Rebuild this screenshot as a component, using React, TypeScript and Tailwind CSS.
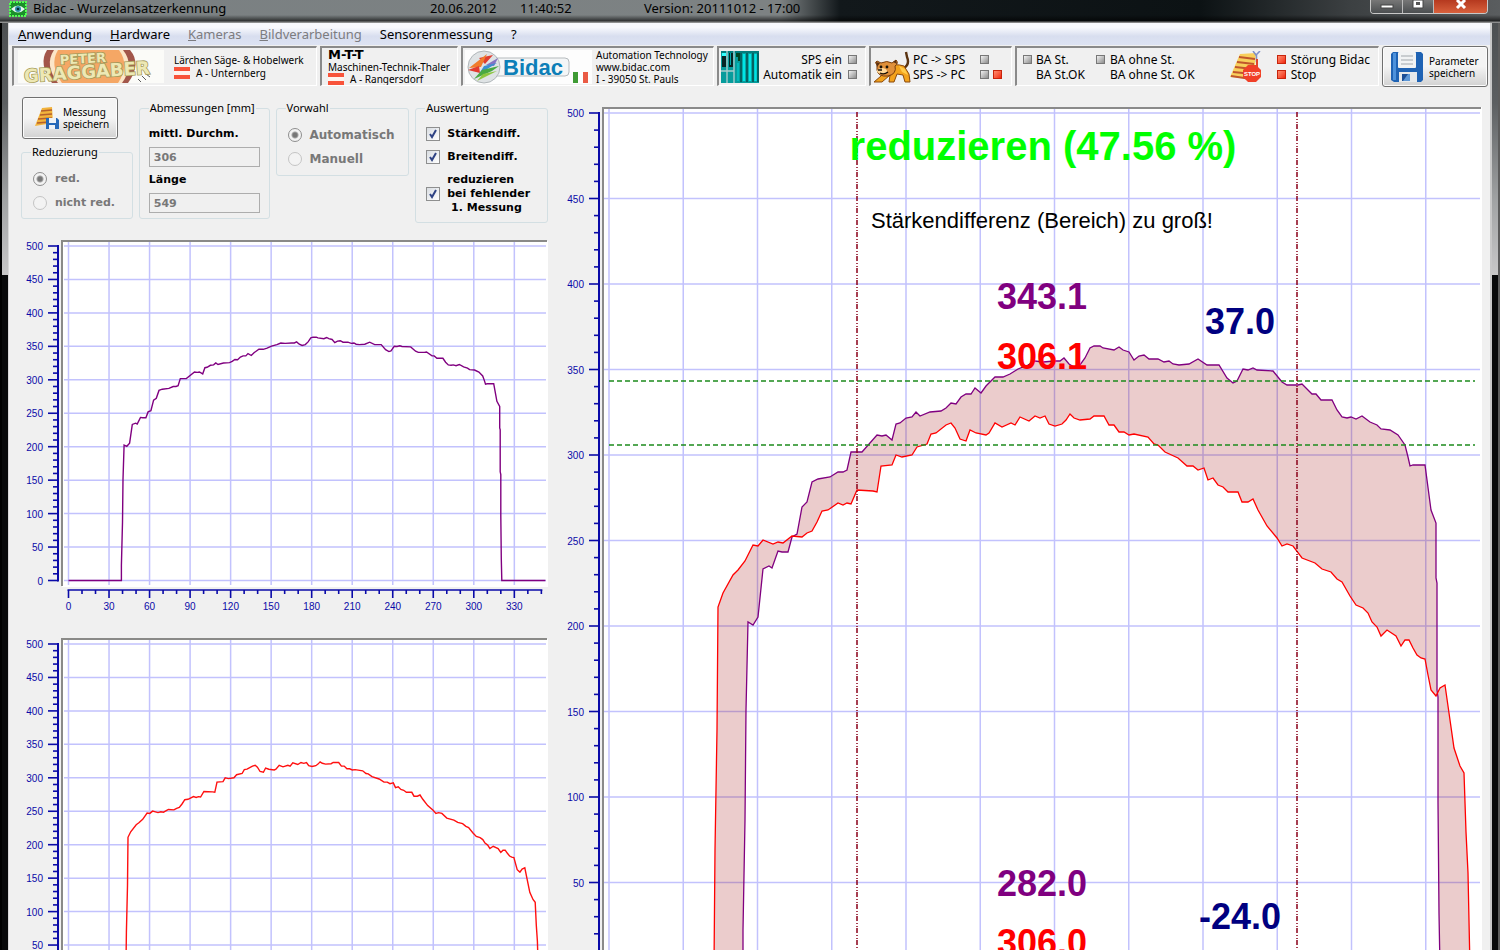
import React from 'react';

type Point = [number, number];

interface Scale {
  left: number;
  top: number;
  pxPerX: number;
  pxPerY: number;
}

// Outlines sampled on the grid of the large plot: 609/968 is the origin.
const SAMPLE_ORIGIN = { x: 609, y: 968, perX: 2.475, perY: 1.71 };

const UPPER_SAMPLES =
  '743,968 743,930 745,820 746,710 748,622 753,625 758,617 763,569 769,566 772,568 778,551 782,552 788,552 792,537 797,534 802,507 807,502 812,482 818,479 830,477 838,472 843,472 847,470 851,452 862,452 877,435 882,436 886,435 892,440 896,424 900,423 906,418 912,417 916,412 920,416 930,412 941,411 946,408 951,403 956,404 961,397 966,394 971,394 975,388 981,393 986,386 995,377 1003,377 1010,374 1018,369 1028,365 1035,361 1043,362 1055,361 1060,361 1064,358 1069,364 1074,367 1080,365 1085,358 1090,348 1094,346 1100,346 1103,348 1114,350 1119,347 1123,350 1129,352 1134,360 1139,356 1144,355 1149,359 1158,359 1164,362 1169,361 1173,364 1179,365 1189,364 1198,359 1207,365 1219,365 1227,378 1233,383 1237,381 1243,369 1248,370 1253,368 1257,370 1273,371 1282,382 1287,385 1298,385 1302,384 1312,394 1316,394 1321,400 1332,400 1337,410 1342,417 1347,418 1351,417 1356,419 1362,416 1370,422 1377,425 1381,429 1390,430 1398,435 1405,445 1408,457 1410,466 1413,465 1425,465 1431,510 1436,523 1436,578 1437,583 1437,690 1438,697 1438,802 1439,913 1440,968';

const LOWER_SAMPLES =
  '714,968 715,850 717,730 718,607 723,593 733,575 738,570 745,561 753,545 758,546 763,540 773,544 778,542 783,543 792,536 802,537 807,533 812,531 817,522 822,511 828,510 838,503 843,505 847,503 851,504 857,490 873,491 877,492 881,466 892,465 896,455 902,457 912,455 917,447 927,444 931,434 936,433 946,425 951,423 955,428 960,439 966,441 970,430 976,433 986,435 989,433 995,423 1002,427 1011,423 1015,425 1020,417 1029,421 1035,416 1040,418 1045,416 1049,424 1055,426 1062,424 1066,420 1070,414 1074,418 1080,420 1090,419 1094,416 1104,416 1109,425 1114,425 1119,432 1124,432 1129,435 1134,434 1148,437 1154,444 1158,445 1165,452 1178,458 1187,466 1193,466 1198,470 1204,468 1208,480 1213,478 1218,485 1223,487 1228,492 1238,492 1242,502 1248,502 1253,499 1258,510 1267,526 1277,538 1282,546 1287,544 1293,546 1302,558 1315,563 1322,569 1331,572 1337,579 1342,582 1350,596 1356,605 1363,608 1368,613 1372,622 1377,627 1381,636 1387,630 1396,636 1401,646 1405,640 1409,640 1413,648 1417,655 1421,658 1425,659 1428,675 1431,690 1436,696 1440,688 1445,685 1449,713 1454,748 1460,766 1464,773 1466,832 1468,873 1470,968';

const parseSamples = (samples: string): Point[] =>
  samples.split(' ').map(pair => {
    const [x, y] = pair.split(',').map(Number);
    return [(x - SAMPLE_ORIGIN.x) / SAMPLE_ORIGIN.perX, (SAMPLE_ORIGIN.y - y) / SAMPLE_ORIGIN.perY];
  });

const upper = parseSamples(UPPER_SAMPLES);
const lower = parseSamples(LOWER_SAMPLES);

const camera1: Point[] = [[0, 0], ...upper.map(([x, y]): Point => [x - 15, y]), [353, 0]];
const camera2: Point[] = [[0, 0], ...lower, [353, 0]];

const toPoints = (data: Point[], s: Scale) =>
  data.map(([x, y]) => `${(s.left + x * s.pxPerX).toFixed(1)},${(s.top + (500 - y) * s.pxPerY).toFixed(1)}`).join(' ');

const range = (from: number, to: number, step: number) =>
  Array.from({ length: Math.floor((to - from) / step) + 1 }, (_, i) => from + i * step);

const AXIS = '#0a0aa8';
const GRID = '#c2c2fd';

const YAxis: React.FC<{ scale: Scale; x: number; min?: number }> = ({ scale, x, min = 0 }) => {
  const y = (v: number) => scale.top + (500 - v) * scale.pxPerY;
  return (
    <g stroke={AXIS} strokeWidth="1.6">
      <line x1={x} x2={x} y1={y(500) - 1} y2={y(0) + 1} strokeWidth="2" />
      {range(0, 500, 10).map(v => (
        <line key={v} x1={v % 50 === 0 ? x - 10 : x - 5} x2={x} y1={y(v)} y2={y(v)} />
      ))}
      {range(min, 500, 50).map(v => (
        <text key={v} x={x - 15} y={y(v) + 4} textAnchor="end" fontSize="10" fill={AXIS} stroke="none">{v}</text>
      ))}
    </g>
  );
};

const CameraPlot: React.FC<{ data: Point[]; color: string; label: string }> = ({ data, color, label }) => {
  const scale: Scale = { left: 48.5, top: 10, pxPerX: 1.351, pxPerY: 0.669 };
  const x = (v: number) => scale.left + v * scale.pxPerX;
  const y = (v: number) => scale.top + (500 - v) * scale.pxPerY;
  return (
    <svg viewBox="0 0 528 380" className="block h-auto w-full font-['Liberation_Sans',Arial,sans-serif]" role="img" aria-label={label}>
      <rect x="42" y="5" width="486" height="346" fill="#fff" />
      <g stroke={GRID} strokeWidth="1.5">
        {range(0, 500, 50).map(v => <line key={v} x1="44" x2="526" y1={y(v)} y2={y(v)} />)}
        {range(0, 330, 30).map(v => <line key={v} x1={x(v)} x2={x(v)} y1="6" y2="349" />)}
      </g>
      <path d="M42 350V5H527" fill="none" stroke="#8a8a88" strokeWidth="2" />
      <YAxis scale={scale} x={38} />
      <g stroke={AXIS} strokeWidth="1.6">
        <line x1={x(0) - 1} x2={x(350) + 1} y1="354" y2="354" />
        {range(0, 350, 10).map(v => <line key={v} x1={x(v)} x2={x(v)} y1="354" y2={v % 30 === 0 ? 362 : 358} />)}
        {range(0, 330, 30).map(v => (
          <text key={v} x={x(v)} y="374" textAnchor="middle" fontSize="10" fill={AXIS} stroke="none">{v}</text>
        ))}
      </g>
      <polyline points={toPoints(data, scale)} fill="none" stroke={color} strokeWidth="1.4" />
    </svg>
  );
};

const ResultPlot: React.FC = () => {
  const scale: Scale = { left: 49, top: 13, pxPerX: 2.475, pxPerY: 1.71 };
  const x = (v: number) => scale.left + v * scale.pxPerX;
  const y = (v: number) => scale.top + (500 - v) * scale.pxPerY;
  return (
    <svg viewBox="0 0 922 900" className="block h-auto w-full font-['Liberation_Sans',Arial,sans-serif]" role="img" aria-label="Auswertung">
      <rect x="42" y="7" width="880" height="893" fill="#fff" />
      <g stroke={GRID} strokeWidth="1.5">
        {range(50, 500, 50).map(v => <line key={v} x1="44" x2="920" y1={y(v)} y2={y(v)} />)}
        {range(0, 330, 30).map(v => <line key={v} x1={x(v)} x2={x(v)} y1="9" y2="900" />)}
      </g>
      <path d="M43 900V8H921" fill="none" stroke="#8a8a8a" strokeWidth="2" />
      <YAxis scale={scale} x={39} min={50} />
      <polygon points={toPoints([...upper, ...[...lower].reverse()], scale)} fill="#990000" fillOpacity="0.2" />
      <polyline points={toPoints(upper, scale)} fill="none" stroke="#800080" strokeWidth="1.3" />
      <polyline points={toPoints(lower, scale)} fill="none" stroke="#ff0000" strokeWidth="1.3" />
      <g stroke="#1c8a1c" strokeWidth="1.5" strokeDasharray="5 3">
        <line x1="49" x2="915" y1="281" y2="281" />
        <line x1="49" x2="915" y1="345" y2="345" />
      </g>
      <g stroke="#8b0018" strokeWidth="1.5" strokeDasharray="5 2 1 2 1 1">
        <line x1="297" x2="297" y1="12" y2="900" />
        <line x1="737" x2="737" y1="12" y2="900" />
      </g>
      <g fontWeight="bold" textAnchor="middle" fontSize="36">
        <text x="483" y="60" fontSize="40" fill="#00ff00">reduzieren (47.56 %)</text>
        <text x="482" y="209" fill="#800080">343.1</text>
        <text x="482" y="269" fill="#ff0000">306.1</text>
        <text x="680" y="234" fill="#000080">37.0</text>
        <text x="482" y="796" fill="#800080">282.0</text>
        <text x="482" y="855" fill="#ff0000">306.0</text>
        <text x="680" y="829" fill="#000080">-24.0</text>
      </g>
      <text x="482" y="128" textAnchor="middle" fontSize="22" fill="#000">Stärkendifferenz (Bereich) zu groß!</text>
    </svg>
  );
};

const Led: React.FC<{ on?: boolean }> = ({ on }) => (
  <span className={`inline-block size-[9px] shrink-0 border ${on ? 'border-[#c8240c] bg-linear-to-br from-[#ff8a6c] to-[#f01c00]' : 'border-[#777] bg-linear-to-br from-[#f2f2f2] to-[#8e8e8e]'}`} />
);

const AustriaFlag: React.FC = () => (
  <svg viewBox="0 0 16 12" className="h-3 w-4 shrink-0">
    <rect width="16" height="12" fill="#f8533a" />
    <rect y="4" width="16" height="4" fill="#fff3ee" />
  </svg>
);

const GraggaberLogo: React.FC = () => (
  <svg viewBox="0 0 146 33" className="h-[33px] w-[146px] shrink-0 font-['DejaVu_Sans',Verdana,sans-serif]">
    <rect width="146" height="33" fill="#fbfbf8" />
    <path d="M29 0H112Q124 14 110 33H34Q20 14 29 0Z" fill="#a2564a" />
    <path d="M36 0H105Q117 15 104 33H40Q26 15 36 0Z" fill="#fce6c8" />
    <path d="M40 0H101Q112 15 100 33H44Q31 15 40 0Z" fill="#f5a765" />
    <path d="M120 29l3 3M124 26l4 4M128 24l4 3" stroke="#5b5b5b" />
    <g fontWeight="bold" stroke="#a49a5c" strokeWidth="1.6" paintOrder="stroke" fill="#ede8b4">
      <text x="42" y="13" fontSize="13" transform="rotate(-3 70 12)">PETER</text>
      <text x="6" y="28" fontSize="18" transform="rotate(-4 70 24)">GRAGGABER</text>
    </g>
  </svg>
);

const BidacLogo: React.FC = () => (
  <svg viewBox="0 0 127 34" className="h-[34px] w-[127px] shrink-0 font-['Liberation_Sans',Arial,sans-serif]">
    <rect width="127" height="34" fill="#fdfdfd" />
    <rect x="24" y="8" width="80" height="18" rx="4" fill="#f4f6f7" stroke="#b5babd" />
    <circle cx="19" cy="17" r="16" fill="#dfe3e5" stroke="#b0b6b9" />
    <path d="M14 8l14-3-8 9z" fill="#e03c30" />
    <path d="M4 18L22 4l-6 13z" fill="#f07c2c" />
    <path d="M3 20l11-4 1 7z" fill="#e23b2f" />
    <path d="M21 15l12-7-4 8z" fill="#8572c4" />
    <path d="M14 24l5-8 13-3z" fill="#3b8fd0" />
    <path d="M9 29l8-9 17-4-7 5z" fill="#49a942" />
    <path d="M12 31l6-7 14-3z" fill="#8cc63f" />
    <text x="38" y="25" fontSize="22" fontWeight="bold" fill="#0d7fb8">Bidac</text>
    <rect x="108" y="22" width="5" height="11" fill="#3f9b35" />
    <rect x="113" y="22" width="5" height="11" fill="#fff" />
    <rect x="118" y="22" width="5" height="11" fill="#ea5b45" />
  </svg>
);

const PlcIcon: React.FC = () => (
  <svg viewBox="0 0 38 32" className="h-8 w-[38px] shrink-0">
    <rect width="38" height="32" fill="#069c9c" />
    <path d="M0 0h38v2H0z" fill="#007c7c" />
    <path d="M1 5h4v11H1zM8 2h4v14H8z" fill="#052525" />
    <path d="M1 2h4v3H1z" fill="#3ff" />
    <path d="M9 2h1v12H9z" fill="#0aa" />
    <path d="M15 2h4v8h-2V6h-2z" fill="#042" />
    <path d="M6 0v32M13 0v32M0 20h13" stroke="#a8cccc" strokeWidth="1.4" />
    <path d="M20 2v29M26 2v29M32 2v29M37 2v29" stroke="#063c3c" strokeWidth="1.2" />
    <path d="M23 3v27M29 3v27M34.500 3v27" stroke="#00e5e5" strokeWidth="2.400" />
    <path d="M17 12v18" stroke="#0bb" strokeWidth="2" />
  </svg>
);

const DogIcon: React.FC = () => (
  <svg viewBox="0 0 38 34" className="h-[34px] w-[38px] shrink-0">
    <path d="M31 18Q37 14 34 7L33 2" fill="none" stroke="#5a3310" strokeWidth="2.400" />
    <path d="M12 17Q22 13 31 16L36 24 37 32H32L30 25 24 24 21 32H16L17 25 9 32H1L8 26Z" fill="#f3a21c" stroke="#8b4a0c" />
    <path d="M26 16l6 3 3 6-6-3z" fill="#ffca4a" />
    <path d="M4 15Q1 12 4 11L8 13Q14 10 19 13L23 10Q26 13 22 16Q24 24 15 26Q5 27 4 20Z" fill="#e0903a" stroke="#7a3d0c" />
    <path d="M3 12l4 1-3 4zM20 12l3-2 1 4z" fill="#5a3010" />
    <ellipse cx="9" cy="21" rx="5" ry="3" fill="#ffd99a" />
    <circle cx="8" cy="17" r="1.400" fill="#1a1208" />
    <circle cx="14" cy="17" r="1.400" fill="#1a1208" />
    <path d="M5 20h4M7 23q4 2 8-1" stroke="#1a1208" strokeWidth="1.300" fill="none" />
  </svg>
);

const StopIcon: React.FC = () => (
  <svg viewBox="0 0 32 32" className="size-8 shrink-0 font-['Liberation_Sans',Arial,sans-serif]">
    <path d="M10 3L26 2 24 28 0 26Z" fill="#f8cf5c" />
    <path d="M9 6l16 2M7 11l17 2M5 16l18 2M3 21l20 2M1 25l20 3" stroke="#c0562c" strokeWidth="1.800" />
    <path d="M23 0l3 4 4-4M26.500 3v8" stroke="#7f8fc8" strokeWidth="1.500" fill="none" />
    <path d="M27 8v8" stroke="#e0442c" strokeWidth="2" />
    <path d="M18 14h8l5 5v7l-5 5h-8l-5-5v-7z" fill="#f04028" />
    <text x="22" y="25" textAnchor="middle" fontSize="6" fontWeight="bold" fill="#fff">STOP</text>
  </svg>
);

const FloppyIcon: React.FC<{ className: string }> = ({ className }) => (
  <svg viewBox="0 0 32 30" className={className}>
    <path d="M2 0H30L32 2V28L30 30H3L0 28V2Z" fill="#1f63b4" />
    <path d="M2 1h3v27H2z" fill="#4d92dc" />
    <rect x="7" y="0" width="18" height="16" rx="1" fill="#f1f3f4" />
    <path d="M10 4h12M10 8h12M10 12h12" stroke="#bcc1c4" strokeWidth="1.500" />
    <path d="M8 20H26V30H8Z" fill="#e6e9eb" />
    <path d="M11 22h8v7h-8z" fill="#1c4f96" />
    <path d="M12 29l5-7h2v7z" fill="#5d97d6" />
  </svg>
);

const MeasureSaveIcon: React.FC = () => (
  <svg viewBox="0 0 24 22" className="h-[22px] w-6 shrink-0">
    <path d="M7 1L17 0 18 16 0 19Z" fill="#f2b33c" />
    <path d="M6 4l11-1M5 8l12-1M3 12l14-1M2 16l12-1" stroke="#b5602c" strokeWidth="1.500" />
    <path d="M11 11H22L24 13V22H11Z" fill="#2568b8" />
    <path d="M14 11h7v5h-7zM14 18h6v4h-6z" fill="#eef2f6" />
  </svg>
);

const AppIcon: React.FC = () => (
  <svg viewBox="0 0 18 16" className="h-4 w-[18px] shrink-0">
    <rect x="1" y="1" width="16" height="14" fill="#1b8f2a" stroke="#52ff52" strokeWidth="2" strokeDasharray="2 1" />
    <path d="M2 8Q9 1 16 8Q9 15 2 8Z" fill="#e8f6f4" />
    <circle cx="9" cy="8" r="3" fill="#2e8fa8" />
    <circle cx="9" cy="8" r="1.300" fill="#082830" />
  </svg>
);

const Panel: React.FC<{ className: string; children: React.ReactNode }> = ({ className, children }) => (
  <div className={`flex h-10 items-center overflow-hidden border-t-2 border-l-2 border-t-[#8a8a8a] border-l-[#8a8a8a] border-r border-b border-r-white border-b-white ${className}`}>
    {children}
  </div>
);

const Group: React.FC<{ title: string; className: string; children: React.ReactNode }> = ({ title, className, children }) => (
  <fieldset className={`rounded-[3px] border border-[#d3dfe3] px-[9px] ${className}`}>
    <legend className="px-px text-[11px] leading-[14px]">{title}</legend>
    {children}
  </fieldset>
);

const Radio: React.FC<{ name: string; label: string; checked?: boolean; size: string }> = ({ name, label, checked, size }) => (
  <label className={`flex h-6 items-center gap-2 pl-0.5 font-['DejaVu_Sans',Verdana,sans-serif] font-bold text-[#787878] ${size}`}>
    <input
      type="radio"
      name={name}
      defaultChecked={checked}
      disabled
      className="size-[14px] shrink-0 appearance-none rounded-full border border-[#c4c4c4] bg-[#f3f3f3] checked:border-[#8e8e8e] checked:bg-[radial-gradient(circle,#777_0_2px,#a5a5a5_3px,#f3f3f3_4px)]"
    />
    {label}
  </label>
);

const Check: React.FC<{ children: React.ReactNode }> = ({ children }) => (
  <label className="flex items-center gap-[7px] font-['DejaVu_Sans',Verdana,sans-serif] text-[11px] leading-[14px] font-bold">
    <span className="relative size-[14px] shrink-0">
      <input type="checkbox" defaultChecked className="peer block size-[14px] appearance-none border border-[#8e8f8f] bg-linear-to-br from-[#d9dde2] to-white" />
      <svg viewBox="0 0 14 14" className="pointer-events-none absolute inset-0 hidden size-[14px] peer-checked:block">
        <path d="M4 7l2 3 4-7" fill="none" stroke="#2f4384" strokeWidth="2" />
      </svg>
    </span>
    {children}
  </label>
);

const Measure: React.FC<{ id: string; label: string; value: string }> = ({ id, label, value }) => (
  <div className="flex h-[46px] flex-col gap-1.5 font-['DejaVu_Sans',Verdana,sans-serif] text-[11px] leading-[14px] font-bold">
    <label htmlFor={id}>{label}</label>
    <input id={id} defaultValue={value} disabled className="h-5 w-full border border-[#adadad] bg-[#f0f0f0] px-1 text-[#787878]" />
  </div>
);

const BUTTON = 'flex items-center rounded-[3px] border border-[#707070] bg-linear-to-b from-[#f4f4f4] from-50% to-[#d2d2d2] text-left text-[10px] leading-3 shadow-[inset_0_0_0_1px_#fcfcfc]';

const MENU = [
  { label: 'Anwendung', disabled: false },
  { label: 'Hardware', disabled: false },
  { label: 'Kameras', disabled: true },
  { label: 'Bildverarbeitung', disabled: true },
];

const TitleBar: React.FC = () => (
  <header className="flex h-[23px] items-start justify-between bg-[linear-gradient(180deg,transparent_65%,#0009_90%,#aaa_100%),linear-gradient(90deg,#7a8082_0,#7d8283_52%,#12181b_56%,#0c1214_80%,#3c4042_90%,#5a5d5f_100%)] pl-[9px] text-[13px] leading-[17px]">
    <div className="flex items-center">
      <AppIcon />
      <h1 className="ml-1.5 w-[397px]">Bidac - Wurzelansatzerkennung</h1>
      <span className="w-[90px]">20.06.2012</span>
      <span className="w-[124px]">11:40:52</span>
      <span>Version: 20111012 - 17:00</span>
    </div>
    <div className="mr-3 flex h-[14px] overflow-hidden rounded-b-[4px] border border-t-0 border-[#c8c8c8] text-white">
      <button aria-label="Minimieren" className="flex w-8 items-center justify-center border-r border-[#bbb] bg-linear-to-b from-[#777] to-[#4c4f51]">
        <svg viewBox="0 0 14 5" className="h-[5px] w-3.5"><rect x="1" y="1" width="12" height="3" fill="#fff" stroke="#444" /></svg>
      </button>
      <button aria-label="Maximieren" className="flex w-[31px] items-start justify-center border-r border-[#bbb] bg-linear-to-b from-[#777] to-[#4c4f51]">
        <svg viewBox="0 0 12 9" className="h-[9px] w-3"><path d="M1 0H11V8H1Z" fill="#fff" stroke="#444" /><path d="M4 2h4v3H4z" fill="#555" /></svg>
      </button>
      <button aria-label="Schließen" className="flex w-[53px] items-start justify-center bg-linear-to-b from-[#b5391f] to-[#d8603c]">
        <svg viewBox="0 0 12 9" className="h-[9px] w-3"><path d="M2 0l8 8M10 0L2 8" stroke="#fff" strokeWidth="3" /></svg>
      </button>
    </div>
  </header>
);

const Toolbar: React.FC = () => (
  <div className="flex gap-[3px] bg-[#f0f0f0] pt-px pr-0.5 pl-[3px]">
    <Panel className="w-[305px] gap-2.5 pl-1">
      <GraggaberLogo />
      <div className="text-[10px] leading-[13px] whitespace-nowrap">
        <p>Lärchen Säge- &amp; Hobelwerk</p>
        <p className="flex items-center gap-1.5"><AustriaFlag />A - Unternberg</p>
      </div>
    </Panel>
    <Panel className="w-[138px] pl-1.5">
      <div className="text-[10px] leading-3 whitespace-nowrap">
        <p className="font-['DejaVu_Sans',Verdana,sans-serif] text-[13px] leading-3 font-bold">M-T-T</p>
        <p>Maschinen-Technik-Thaler</p>
        <p className="flex items-center gap-1.5"><AustriaFlag />A - Rangersdorf</p>
      </div>
    </Panel>
    <Panel className="w-[253px] gap-1 pl-0.5">
      <BidacLogo />
      <div className="text-[10px] leading-3 whitespace-nowrap">
        <p>Automation Technology</p>
        <p>www.bidac.com</p>
        <p>I - 39050 St. Pauls</p>
      </div>
    </Panel>
    <Panel className="w-[149px] justify-between pr-2 pl-0.5">
      <PlcIcon />
      <div className="text-right text-xs leading-[15px] whitespace-nowrap">
        <p className="flex items-center justify-end gap-1.5">SPS ein<Led /></p>
        <p className="flex items-center justify-end gap-1.5">Automatik ein<Led /></p>
      </div>
    </Panel>
    <Panel className="w-[143px] gap-0.5 pl-0.5">
      <DogIcon />
      <div className="grid grid-cols-[67px_13px_10px] items-center text-xs leading-[15px] whitespace-nowrap">
        <span>PC -&gt; SPS</span><Led /><span />
        <span>SPS -&gt; PC</span><Led /><Led on />
      </div>
    </Panel>
    <Panel className="flex-1 justify-between pr-2 pl-1.5 text-xs leading-[15px] whitespace-nowrap">
      <div className="grid grid-cols-[13px_60px_14px_90px] items-center">
        <Led /><span>BA St.</span><Led /><span>BA ohne St.</span>
        <span /><span>BA St.OK</span><span /><span>BA ohne St. OK</span>
      </div>
      <div className="flex items-center gap-[15px]">
        <StopIcon />
        <div>
          <p className="flex items-center gap-[5px]"><Led on />Störung Bidac</p>
          <p className="flex items-center gap-[5px]"><Led on />Stop</p>
        </div>
      </div>
    </Panel>
    <button className={`h-[41px] w-[106px] gap-1.5 pl-2 ${BUTTON}`}>
      <FloppyIcon className="h-[30px] w-8 shrink-0" />
      <span>Parameter speichern</span>
    </button>
  </div>
);

const Controls: React.FC = () => (
  <div className="flex h-[135px] items-start gap-1.5 pl-px">
    <div className="w-[112px]">
      <button className={`ml-px mt-[-4px] h-[42px] w-24 gap-1 pl-3 ${BUTTON}`}>
        <MeasureSaveIcon />
        <span>Messung speichern</span>
      </button>
      <Group title="Reduzierung" className="mt-1.5 h-[74px] pt-2">
        <Radio name="reduzierung" label="red." checked size="text-[11px]" />
        <Radio name="reduzierung" label="nicht red." size="text-[11px]" />
      </Group>
    </div>
    <Group title="Abmessungen [mm]" className="h-[118px] w-[131px] pt-3">
      <Measure id="durchmesser" label="mittl. Durchm." value="306" />
      <Measure id="laenge" label="Länge" value="549" />
    </Group>
    <Group title="Vorwahl" className="h-[75px] w-[134px] pt-2">
      <Radio name="vorwahl" label="Automatisch" checked size="text-xs" />
      <Radio name="vorwahl" label="Manuell" size="text-xs" />
    </Group>
    <Group title="Auswertung" className="h-[122px] w-[133px] pt-3">
      <div className="flex flex-col gap-[9px] pl-px">
        <Check>Stärkendiff.</Check>
        <Check>Breitendiff.</Check>
        <Check><span>reduzieren<br />bei fehlender<br />&nbsp;1. Messung</span></Check>
      </div>
    </Group>
  </div>
);

const FRAME = 'bg-[linear-gradient(180deg,#4c4f51_0,#5c5f61_80px,#a2a4a5_180px,#c8c8c8_252px,#08090a_252px)]';

const App: React.FC = () => (
  <div className="flex h-screen flex-col overflow-hidden bg-[#0c0e10] font-['Noto_Sans',Tahoma,sans-serif] text-black">
    <TitleBar />
    <div className="flex min-h-0 flex-1">
      <div className={`w-[9px] shrink-0 border-r border-l-2 border-r-[#d8d8d8] border-l-black ${FRAME}`} />
      <div className="flex min-w-0 flex-1 flex-col bg-[#f0f0f0]">
        <nav className="flex h-[22px] shrink-0 items-center gap-[18px] bg-linear-to-b from-[#f8f9fd] from-20% via-[#d8deef] via-60% to-[#dde3f3] pl-[9px] text-[13px] leading-[18px]">
          {MENU.map(({ label, disabled }) => (
            <button key={label} disabled={disabled} className="disabled:text-[#7c7c80]">
              <span className="underline">{label[0]}</span>{label.slice(1)}
            </button>
          ))}
          <button>Sensorenmessung</button>
          <button>?</button>
        </nav>
        <Toolbar />
        <main className="flex min-h-0 flex-1 items-start overflow-hidden pr-2 pl-[11px]">
          <section className="w-[528px] shrink-0 pt-[14px]">
            <Controls />
            <div className="flex flex-col gap-[18px]">
              <CameraPlot data={camera1} color="#800080" label="Kamera 1" />
              <CameraPlot data={camera2} color="#ff1010" label="Kamera 2" />
            </div>
          </section>
          <section className="ml-3 min-w-0 flex-1 pt-[13px]">
            <ResultPlot />
          </section>
        </main>
      </div>
      <div className={`w-[10px] shrink-0 border-r-2 border-l-2 border-r-[#5c5c5c] border-l-[#c8c8c8] ${FRAME}`} />
    </div>
  </div>
);

export default App;
